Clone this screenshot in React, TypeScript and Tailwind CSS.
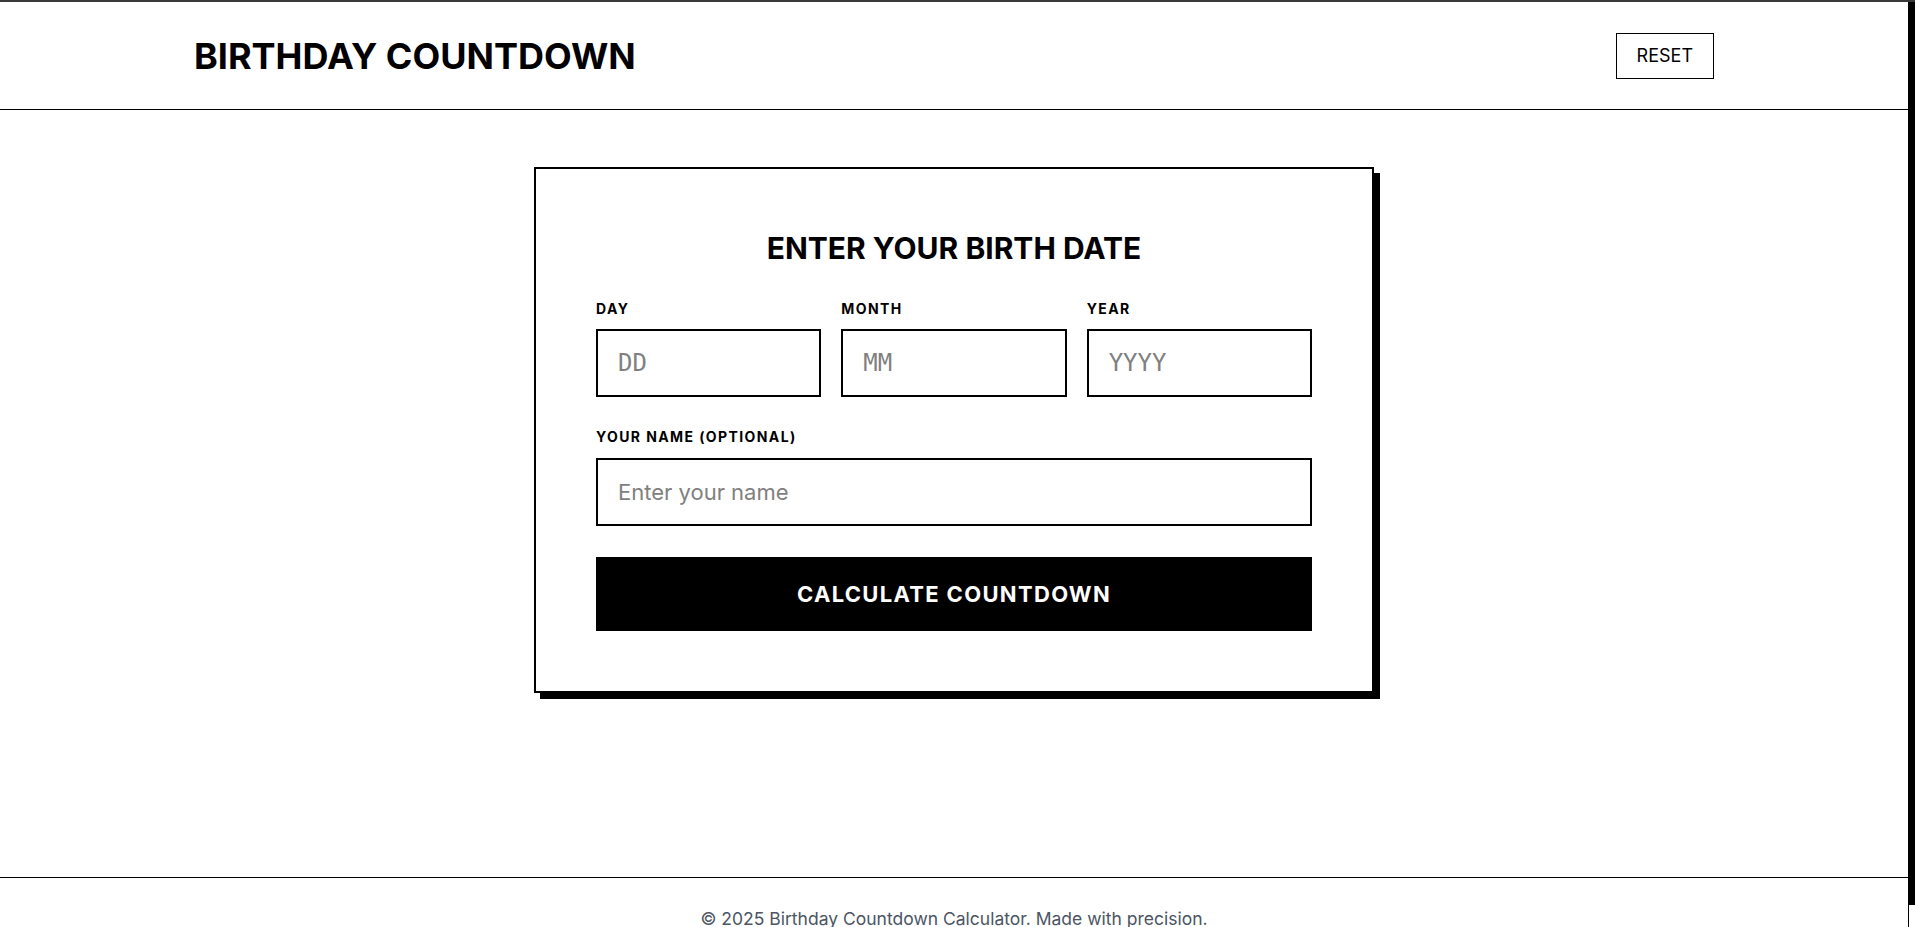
import React from "react";

export default function App() {
  return (
    <div className="h-[927px] w-[1915px] overflow-hidden bg-white flex flex-col font-['Inter','Noto_Sans',sans-serif] text-black">
      <div className="h-[2px] w-full bg-[#3a3a3a] shrink-0" />
      <div className="flex flex-1 min-h-0">
        <div className="w-[1908px] flex flex-col">
          <header className="h-[108px] border-b border-black shrink-0">
            <div className="w-[1520px] mx-auto h-full flex items-center justify-between">
              <h1 className="text-4xl font-bold">BIRTHDAY COUNTDOWN</h1>
              <button className="border border-black px-5 py-2 text-lg leading-7 font-normal">RESET</button>
            </div>
          </header>
          <main className="h-[767px] shrink-0 pt-[57px]">
            <div className="w-[840px] mx-auto border-2 border-black bg-white shadow-[6px_6px_0_0_#000] p-[60px]">
              <h2 className="text-3xl leading-9 font-bold text-center mt-[1px] mb-[33px]">ENTER YOUR BIRTH DATE</h2>
              <div className="grid grid-cols-3 gap-5">
                <Field label="DAY" ph="DD" />
                <Field label="MONTH" ph="MM" />
                <Field label="YEAR" ph="YYYY" />
              </div>
              <div className="mt-[30px]">
                <label className="block text-sm leading-5 font-bold tracking-widest mb-[11px]">YOUR NAME (OPTIONAL)</label>
                <input
                  className="w-full border-2 border-black px-5 py-[18px] text-[22px] leading-7 placeholder:text-[#808080] outline-none"
                  placeholder="Enter your name"
                />
              </div>
              <button className="mt-[31px] w-full bg-black text-white h-[74px] text-[22px] font-bold tracking-[0.06em]">
                CALCULATE COUNTDOWN
              </button>
            </div>
          </main>
          <footer className="border-t border-black pt-[29px] text-center text-[17.5px] leading-6 text-[#4b5563]">
            © 2025 Birthday Countdown Calculator. Made with precision.
          </footer>
        </div>
        <div className="w-[7px] flex flex-col">
          <div className="flex-1 bg-black" />
          <div className="h-[22px] border-l border-black bg-white" />
        </div>
      </div>
    </div>
  );
}

function Field({ label, ph }: { label: string; ph: string }) {
  return (
    <div>
      <label className="block text-sm leading-5 font-bold tracking-widest mb-[10px]">{label}</label>
      <input
        className="w-full border-2 border-black px-5 py-4 text-2xl leading-8 font-['DejaVu_Sans_Mono',monospace] placeholder:text-[#808080] outline-none"
        placeholder={ph}
      />
    </div>
  );
}
